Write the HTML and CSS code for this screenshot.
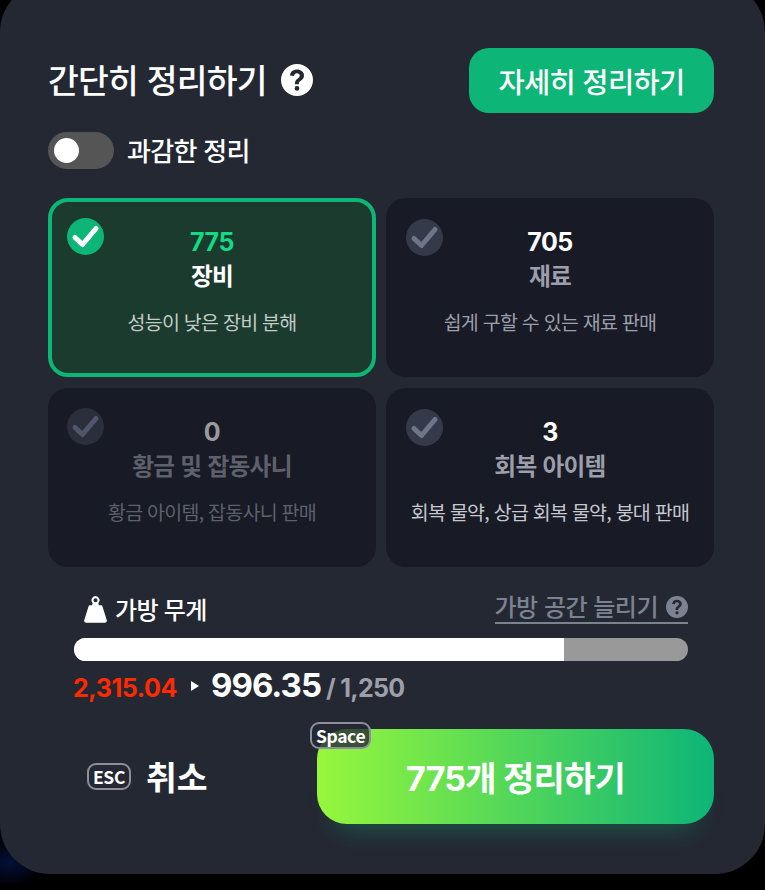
FILE: index.html
```html
<!DOCTYPE html>
<html lang="ko">
<head>
<meta charset="utf-8">
<title>간단히 정리하기</title>
<link rel="stylesheet" href="styles.css">
</head>
<body>
<svg class="defs" width="0" height="0" aria-hidden="true">
  <symbol id="check" viewBox="0 0 37 37"><path d="M8 19.500l7.500 7L29 10.500" fill="none" stroke="currentColor" stroke-width="5" stroke-linecap="round" stroke-linejoin="round"/></symbol>
  <symbol id="help" viewBox="0 0 32 32"><path fill-rule="evenodd" fill="currentColor" d="M16 0a16 16 0 1 0 0 32a16 16 0 1 0 0-32zM16 5.500c-4 0-6.800 2.200-7 6l4 .5c.2-1.700 1.300-2.800 3-2.800c1.600 0 2.800 1 2.800 2.400c0 1.200-.7 1.900-2 2.800c-2 1.400-2.900 2.600-2.900 5v.8h4v-.6c0-1.300.5-1.900 1.900-2.900c2-1.400 3.200-2.900 3.200-5.300c0-3.500-3-5.900-7-5.900zM16 22a2.400 2.400 0 1 0 0 4.800a2.400 2.400 0 1 0 0-4.800z"/></symbol>
</svg>
<main class="panel">
  <header class="head">
    <div class="title-wrap">
      <h1 class="title">간단히 정리하기</h1>
      <svg class="title-help"><use href="#help"/></svg>
    </div>
    <button class="detail-btn">자세히 정리하기</button>
  </header>
  <div class="toggle-row">
    <span class="toggle"><span class="knob"></span></span>
    <span class="toggle-label">과감한 정리</span>
  </div>
  <section class="cards">
    <article class="card selected">
      <span class="tick"><svg><use href="#check"/></svg></span>
      <div class="count">775</div>
      <div class="name">장비</div>
      <div class="desc">성능이 낮은 장비 분해</div>
    </article>
    <article class="card">
      <span class="tick"><svg><use href="#check"/></svg></span>
      <div class="count">705</div>
      <div class="name">재료</div>
      <div class="desc">쉽게 구할 수 있는 재료 판매</div>
    </article>
    <article class="card disabled">
      <span class="tick"><svg><use href="#check"/></svg></span>
      <div class="count">0</div>
      <div class="name">황금 및 잡동사니</div>
      <div class="desc">황금 아이템, 잡동사니 판매</div>
    </article>
    <article class="card">
      <span class="tick"><svg><use href="#check"/></svg></span>
      <div class="count">3</div>
      <div class="name">회복 아이템</div>
      <div class="desc light">회복 물약, 상급 회복 물약, 붕대 판매</div>
    </article>
  </section>
  <section class="weight">
    <div class="weight-head">
      <div class="weight-label">
        <svg class="kettle" viewBox="0 0 24 28"><path fill="currentColor" fill-rule="evenodd" d="M12 0a4.300 4.300 0 0 0-3 7.300L8.500 9.500H6.500C5.500 9.500 5 10 4.700 10.800L.3 25c-.5 1.500.3 2.800 1.900 2.800h19.600c1.600 0 2.400-1.300 1.900-2.800L19.300 10.800C19 10 18.500 9.500 17.500 9.500H15.500L15 7.300A4.300 4.300 0 0 0 12 0zM12 2.200a2.100 2.100 0 1 1 0 4.200a2.100 2.100 0 0 1 0-4.200z"/></svg>
        <span>가방 무게</span>
      </div>
      <a class="expand">가방 공간 늘리기<svg class="expand-help"><use href="#help"/></svg></a>
    </div>
    <div class="bar"><div class="bar-fill"></div></div>
    <div class="numbers">
      <span class="before">2,315.04</span>
      <span class="arrow"></span>
      <span class="after">996.35</span>
      <span class="max">/ 1,250</span>
    </div>
  </section>
  <footer class="actions">
    <button class="cancel"><span class="key">ESC</span><span class="cancel-text">취소</span></button>
    <button class="confirm"><span class="key space">Space</span><span class="confirm-text">775개 정리하기</span></button>
  </footer>
</main>
</body>
</html>
```
FILE: styles.css
```css
* { box-sizing: border-box; }
html, body { margin: 0; height: 890px; overflow: hidden; }
body {
  background: radial-gradient(36px 24px at 10px 862px, #031038 0%, #020514 70%, #000 100%), #000;
  font-family: "Noto Sans CJK KR", "Noto Sans", sans-serif;
  color: #fff;
}
button { font-family: inherit; border: 0; cursor: pointer; color: #fff; padding: 0; }
.defs { position: absolute; }

.panel {
  width: 765px;
  height: 892px;
  margin-top: -18px;
  padding: 66px 51px 0 48px;
  background: #242833;
  border-radius: 50px;
}

.head { display: flex; justify-content: space-between; align-items: center; height: 65px; }
.title-wrap { display: flex; align-items: center; gap: 14px; margin-top: -1px; }
.title { margin: -3px 0 0; font-size: 33.500px; font-weight: 500; letter-spacing: -.8px; line-height: 40px; }
.title-help { width: 32px; height: 32px; }
.detail-btn {
  width: 245px; height: 65px; border-radius: 20px;
  background: #0db577; font-size: 28.500px; font-weight: 500; letter-spacing: -.7px; line-height: 60px;
}

.toggle-row { display: flex; align-items: center; gap: 13px; margin-top: 19px; height: 37px; }
.toggle { width: 66px; height: 37px; border-radius: 19px; background: #555; display: flex; align-items: center; padding-left: 6px; }
.knob { width: 25px; height: 25px; border-radius: 50%; background: #fff; }
.toggle-label { font-size: 26px; font-weight: 500; letter-spacing: -.7px; margin-top: -3px; }

.cards { display: grid; grid-template-columns: 328px 328px; grid-auto-rows: 179px; column-gap: 10px; row-gap: 11px; margin-top: 29px; }
.card {
  position: relative; border-radius: 20px; background: #181a25;
  display: flex; flex-direction: column; align-items: center; padding-top: 26px; color: #fff;
}
.tick {
  position: absolute; left: 20px; top: 21px; width: 37px; height: 37px; border-radius: 50%;
  background: #353a4b; color: #70768a;
}
.tick svg { display: block; width: 37px; height: 37px; }
.count { font-family: "Inter", "Noto Sans CJK KR", sans-serif; font-size: 25px; font-weight: 700; line-height: 36px; letter-spacing: -.5px; }
.name { font-size: 23.700px; font-weight: 700; line-height: 32px; letter-spacing: -.7px; color: #9c9eaa; margin-top: -1px; }
.desc { font-size: 19.500px; font-weight: 400; line-height: 26px; letter-spacing: -.75px; color: #9c9eaa; margin-top: 18px; }
.desc.light { color: #c6c7cf; }

.card.selected { background: #1a3b2e; border: 4px solid #0db577; padding-top: 22px; }
.card.selected .tick { left: 15px; top: 16px; background: #0db577; color: #fff; }
.card.selected .count { color: #0fdc85; }
.card.selected .name { color: #fff; }
.card.selected .desc { color: #c3cbc8; }

.card.disabled .tick { background: #2b2e3b; color: #51566a; left: 19px; top: 20px; }
.card.disabled .count { color: #9a9a9e; }
.card.disabled .name { color: #5e606c; }
.card.disabled .desc { color: #5e606c; }

.weight { margin: 25px 0 0 26px; width: 614px; }
.weight-head { display: flex; justify-content: space-between; align-items: flex-end; height: 34px; }
.weight-label { display: flex; align-items: center; gap: 8px; padding-left: 10px; font-size: 24px; font-weight: 500; letter-spacing: -.7px; line-height: 34px; }
.weight-label span { margin-top: -4px; }
.kettle { width: 23px; height: 27px; margin-bottom: 3px; }
.expand { display: flex; align-items: center; gap: 8px; height: 34px; margin-bottom: 2px; border-bottom: 2px solid #7b8390; color: #7b8390; font-size: 24px; font-weight: 500; letter-spacing: -.5px; line-height: 28px; }
.expand-help { width: 22px; height: 22px; margin-top: 2px; }
.bar { margin-top: 12px; height: 23px; border-radius: 12px; background: #999; overflow: hidden; }
.bar-fill { width: 490px; height: 100%; background: #fff; }
.numbers { display: flex; align-items: baseline; height: 50px; margin-left: -1px; font-family: "Inter", "Noto Sans CJK KR", sans-serif; }
.before { color: #ff2a00; font-size: 25px; font-weight: 700; letter-spacing: -.4px; }
.arrow { width: 0; height: 0; margin: 0 12px 0 14px; border-left: 8px solid #fff; border-top: 5px solid transparent; border-bottom: 5px solid transparent; align-self: center; }
.after { font-size: 33px; font-weight: 700; letter-spacing: -1px; line-height: 48px; }
.max { color: #9c9eaa; font-size: 25px; font-weight: 700; letter-spacing: -.7px; margin-left: 5px; }

.actions { display: flex; align-items: center; margin-top: 18px; }
.cancel { background: none; width: 269px; display: flex; align-items: center; gap: 15px; padding-left: 39px; margin-top: 0; }
.cancel-text { font-size: 33.500px; font-weight: 700; line-height: 44px; margin-top: -2px; }
.key {
  border: 2px solid #8d8f9c; border-radius: 9px; font-size: 17.500px; font-weight: 700; line-height: 23px;
  padding: 0 4px; display: inline-block; letter-spacing: -.4px;
}
.confirm {
  position: relative; width: 397px; height: 95px; border-radius: 30px;
  background: linear-gradient(90deg, #96f73c 0%, #0db577 100%);
  box-shadow: 0 24px 24px -18px rgba(13, 181, 119, .3);
}
.confirm-text { font-family: "Inter", "Noto Sans CJK KR", sans-serif; font-size: 34px; font-weight: 700; letter-spacing: -.8px; }
.key.space {
  position: absolute; left: -7px; top: -7px; background: rgba(36, 40, 51, .8);
}
```
